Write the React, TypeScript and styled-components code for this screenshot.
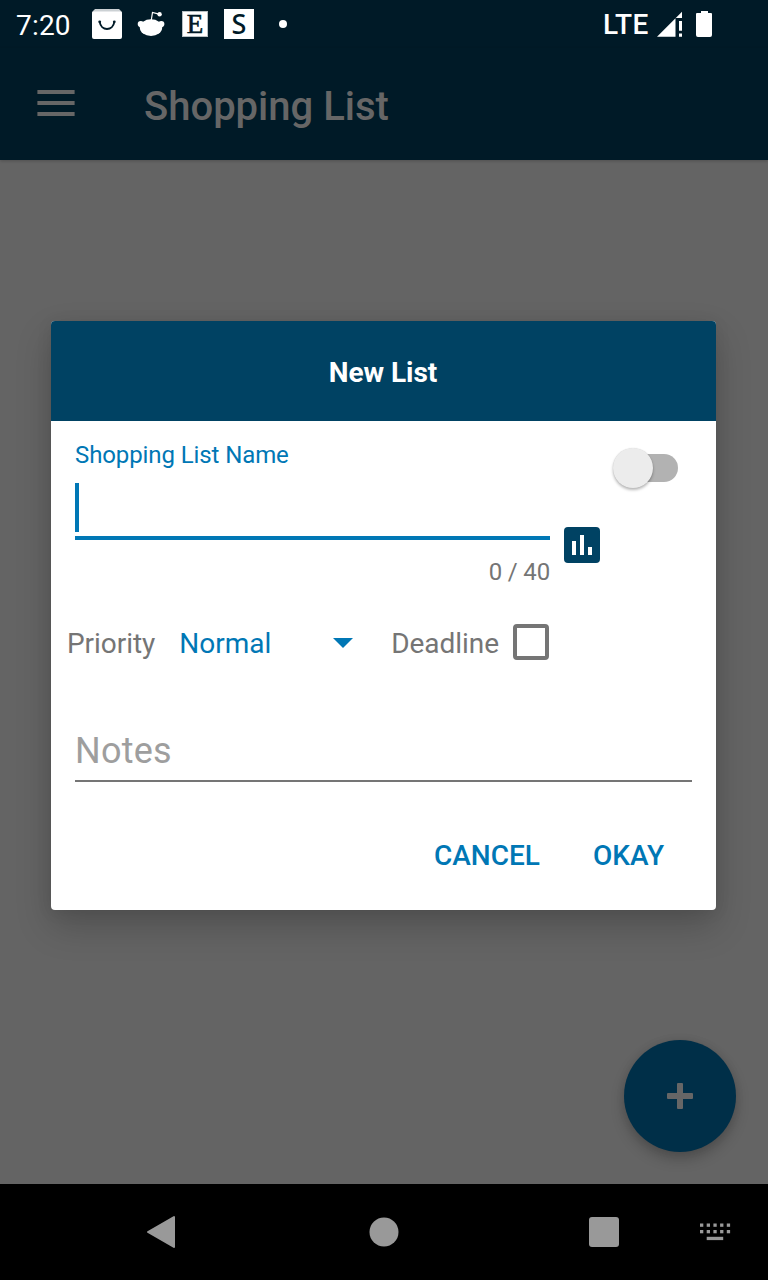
import React from "react";
import styled, { createGlobalStyle } from "styled-components";

const GlobalStyle = createGlobalStyle`
  * { box-sizing: border-box; }
  body { margin: 0; font-family: Roboto, "Liberation Sans", sans-serif; background: #000; }
  button { font: inherit; border: 0; background: none; padding: 0; }
  svg { display: block; flex: none; }
`;

const Screen = styled.div`
  position: relative;
  width: 768px;
  height: 1280px;
  display: flex;
  flex-direction: column;
  overflow: hidden;
`;

const StatusBar = styled.div`
  height: 48px;
  flex: none;
  display: flex;
  align-items: center;
  padding: 2px 54px 0 16px;
  background: #001a27;
  color: #fff;
  font-size: 28px;
  line-height: 32px;
`;

const Clock = styled.span`
  width: 76px;
  margin-top: 2px;
  letter-spacing: 0.2px;
`;

const StatusIcons = styled.div`
  display: flex;
  align-items: center;
  gap: 14px;
  height: 30px;
  margin-top: -2px;
`;

const SystemIcons = styled.div`
  display: flex;
  align-items: center;
  margin-left: auto;
  margin-top: -2px;
`;

const Page = styled.div`
  flex: 1;
  display: flex;
  flex-direction: column;
  background: #646464;
`;

const AppBar = styled.header`
  height: 112px;
  flex: none;
  display: flex;
  align-items: center;
  padding: 0 0 2px 37px;
  background: #001a27;
  box-shadow: 0 1px 3px rgba(0, 0, 0, 0.2);
`;

const Title = styled.h1`
  margin: 8px 0 0 69px;
  color: #666;
  font-size: 40px;
  font-weight: 500;
  line-height: 48px;
`;

const Content = styled.main`
  flex: 1;
  display: flex;
  align-items: flex-end;
  justify-content: flex-end;
  padding: 32px;
`;

const Fab = styled.button`
  width: 112px;
  height: 112px;
  border-radius: 50%;
  display: grid;
  place-items: center;
  background: #002f48;
  box-shadow: 0 7px 14px rgba(0, 0, 0, 0.22), 0 0 8px rgba(0, 0, 0, 0.08);
`;

const NavBar = styled.nav`
  height: 96px;
  flex: none;
  display: flex;
  align-items: center;
  padding-left: 146px;
  background: #000;
`;

const NavItem = styled.div<{ $gap: number }>`
  margin-right: ${(p) => p.$gap}px;
`;

const Dialog = styled.section`
  position: absolute;
  left: 51px;
  top: 321px;
  width: 665px;
  height: 589px;
  display: flex;
  flex-direction: column;
  border-radius: 4px;
  overflow: hidden;
  background: #fff;
  box-shadow: 0 16px 36px rgba(0, 0, 0, 0.2), 0 2px 16px rgba(0, 0, 0, 0.08);
`;

const DialogHeader = styled.h2`
  height: 100px;
  flex: none;
  display: flex;
  align-items: center;
  justify-content: center;
  margin: 0;
  padding: 2px 1px 0 0;
  background: #004263;
  color: #fff;
  font-size: 28px;
  font-weight: 700;
  letter-spacing: -0.05px;
`;

const NameRow = styled.div`
  height: 179px;
  display: flex;
  align-items: flex-start;
  padding: 0 38px 0 24px;
`;

const NameField = styled.div`
  width: 475px;
  display: flex;
  flex-direction: column;
`;

const NameLabel = styled.label`
  margin-top: 20px;
  color: #0077b5;
  font-size: 24px;
  letter-spacing: -0.1px;
  line-height: 28px;
`;

const NameInput = styled.div`
  height: 57px;
  margin-top: 14px;
  border-bottom: 4px solid #0077b5;
`;

const Caret = styled.div`
  width: 4px;
  height: 49px;
  background: #0077b5;
`;

const Counter = styled.div`
  margin-top: 18px;
  color: #757575;
  font-size: 24px;
  letter-spacing: -0.15px;
  line-height: 28px;
  text-align: right;
`;

const ChartButton = styled.button`
  width: 36px;
  height: 36px;
  margin: 106px 0 0 14px;
`;

const Switch = styled.div`
  width: 65px;
  height: 42px;
  margin: 26px 0 0 auto;
  display: flex;
  align-items: center;
`;

const Thumb = styled.div`
  z-index: 1;
  width: 40px;
  height: 40px;
  flex: none;
  border-radius: 50%;
  background: #ececec;
  box-shadow: 0 2px 3px rgba(0, 0, 0, 0.28), 0 0 1px rgba(0, 0, 0, 0.15);
`;

const Track = styled.div`
  width: 56px;
  height: 28px;
  flex: none;
  margin-left: -31px;
  border-radius: 14px;
  background: #b2b2b2;
`;

const OptionsRow = styled.div`
  height: 84px;
  display: flex;
  align-items: center;
  padding: 4px 0 0 16px;
  font-size: 28px;
  letter-spacing: -0.05px;
  line-height: 32px;
  color: #757575;
`;

const PrioritySelect = styled.div`
  width: 174px;
  margin: 0 38px 0 24px;
  display: flex;
  align-items: center;
  justify-content: space-between;
  color: #0077b5;
  letter-spacing: 0;

  svg {
    margin-top: -2px;
  }
`;

const Checkbox = styled.div`
  width: 36px;
  height: 36px;
  margin: -4px 0 0 13.8px;
  border: 4px solid #757575;
  border-radius: 4px;
`;

const NotesField = styled.div`
  height: 57px;
  margin: 41px 24px 0;
  border-bottom: 2px solid #757575;
  color: #9e9e9e;
  font-size: 36px;
  letter-spacing: 0.25px;
  line-height: 52px;
`;

const Actions = styled.div`
  flex: 1;
  display: flex;
  align-items: center;
  justify-content: flex-end;
  gap: 53px;
  padding: 20px 52px 0 0;
`;

const ActionButton = styled.button`
  color: #0077b5;
  font-size: 28px;
  font-weight: 500;
  line-height: 32px;
`;

const BagIcon = () => (
  <svg width="30" height="30" viewBox="0 0 30 30">
    <path d="M3 0H27L30 3V6H0V3Z" fill="#ccd1d4" />
    <rect y="2.500" width="30" height="27.500" rx="2" fill="#fff" />
    <path d="M7.700 13C8.300 17 11.300 20 15 20S21.700 17 22.300 13" fill="none" stroke="#001a27" strokeWidth="1.8" />
    <circle cx="7.700" cy="12.800" r="1.400" fill="#001a27" />
    <circle cx="22.300" cy="12.800" r="1.400" fill="#001a27" />
  </svg>
);

const RedditIcon = () => (
  <svg width="30" height="30" viewBox="0 0 30 30">
    <g fill="#fff">
      <ellipse cx="15" cy="18.600" rx="11.200" ry="8.400" />
      <circle cx="4.800" cy="15" r="3.100" />
      <circle cx="25.300" cy="15" r="3.100" />
      <circle cx="23.600" cy="5.200" r="2.200" />
    </g>
    <path d="M15.300 11L16.500 3.500L22 4.800" fill="none" stroke="#fff" strokeWidth="1.200" />
  </svg>
);

const LetterIcon = styled.span<{ $serif?: boolean }>`
  width: ${(p) => (p.$serif ? 26 : 30)}px;
  height: ${(p) => (p.$serif ? 26 : 30)}px;
  margin: ${(p) => (p.$serif ? "0 2px" : "0")};
  display: grid;
  place-items: center;
  border: ${(p) => (p.$serif ? "1px solid #b8c0c4" : "0")};
  background: #fff;
  color: #001a27;
  font-family: ${(p) => (p.$serif ? '"Liberation Serif", serif' : '"Noto Sans", sans-serif')};
  font-size: ${(p) => (p.$serif ? 27 : 27)}px;
  font-weight: ${(p) => (p.$serif ? 400 : 500)};
  -webkit-text-stroke: ${(p) => (p.$serif ? "0.6px #001a27" : "0")};
  line-height: ${(p) => (p.$serif ? 24 : 22)}px;
`;

const Dot = styled.span`
  width: 8px;
  height: 8px;
  margin-left: 11px;
  border-radius: 50%;
  background: #fff;
`;

const Network = styled.span`
  margin: 2px 8.5px 0 0;
  font-weight: 500;
  letter-spacing: 0.3px;
`;

const SignalIcon = () => (
  <svg width="26" height="26" viewBox="0 0 26 26" fill="#fff">
    <path d="M25 0.700V7H18.500V25.700H0Z" />
    <path d="M22 10H25V19.700H22ZM22 22.500H25V25.700H22Z" />
  </svg>
);

const BatteryIcon = styled(({ className }: { className?: string }) => (
  <svg className={className} width="18" height="26" viewBox="0 0 18 26" fill="#fff">
    <path d="M5 0H12V2H15Q16 2 16 3V24Q16 26 14 26H2Q0 26 0 24V3Q0 2 1 2H5Z" />
  </svg>
))`
  margin-left: 13px;
`;

const MenuIcon = () => (
  <svg width="38" height="26" viewBox="0 0 38 26" fill="#666">
    <path d="M0.400 0H37.600V4H0.400ZM0.400 11H37.600V15H0.400ZM0.400 22H37.600V26H0.400Z" />
  </svg>
);

const PlusIcon = () => (
  <svg width="26" height="26" viewBox="0 0 26 26" fill="#666">
    <rect x="10" width="6" height="26" rx="1" />
    <rect y="10" width="26" height="6" rx="1" />
  </svg>
);

const ChartIcon = () => (
  <svg width="36" height="36" viewBox="0 0 36 36">
    <rect width="36" height="36" rx="4" fill="#004263" />
    <path d="M8 14H12V28H8ZM16 8H20V28H16ZM24 20H28V28H24Z" fill="#fff" />
  </svg>
);

const DropArrow = () => (
  <svg width="20" height="10" viewBox="0 0 20 10" fill="#0077b5">
    <path d="M0 0H20L10 10Z" />
  </svg>
);

const BackIcon = () => (
  <svg width="30" height="34" viewBox="0 0 30 34">
    <path d="M2 17L28 2V32Z" fill="#999" stroke="#999" strokeWidth="2" strokeLinejoin="round" />
  </svg>
);

const HomeIcon = () => (
  <svg width="30" height="30" viewBox="0 0 30 30">
    <circle cx="15" cy="15" r="14.500" fill="#999" />
  </svg>
);

const RecentsIcon = () => (
  <svg width="30" height="30" viewBox="0 0 30 30">
    <rect width="30" height="30" rx="3" fill="#999" />
  </svg>
);

const KeyboardIcon = () => (
  <svg width="31" height="18" viewBox="0 0 31 18" fill="#999">
    {[0, 6.7, 13.4, 20.1, 26.8].map((x) => (
      <g key={x}>
        <rect x={x} y="0.500" width="3.300" height="3.300" />
        <rect x={x} y="7" width="3.300" height="3.300" />
      </g>
    ))}
    <rect x="6.700" y="13.800" width="16.500" height="3.300" />
  </svg>
);

export default function App() {
  return (
    <>
      <GlobalStyle />
      <Screen>
        <StatusBar>
          <Clock>7:20</Clock>
          <StatusIcons>
            <BagIcon />
            <RedditIcon />
            <LetterIcon $serif>E</LetterIcon>
            <LetterIcon>S</LetterIcon>
            <Dot />
          </StatusIcons>
          <SystemIcons>
            <Network>LTE</Network>
            <SignalIcon />
            <BatteryIcon />
          </SystemIcons>
        </StatusBar>
        <Page>
          <AppBar>
            <MenuIcon />
            <Title>Shopping List</Title>
          </AppBar>
          <Content>
            <Fab aria-label="Add list">
              <PlusIcon />
            </Fab>
          </Content>
        </Page>
        <NavBar>
          <NavItem $gap={193}><BackIcon /></NavItem>
          <NavItem $gap={190}><HomeIcon /></NavItem>
          <NavItem $gap={81}><RecentsIcon /></NavItem>
          <KeyboardIcon />
        </NavBar>
        <Dialog role="dialog">
          <DialogHeader>New List</DialogHeader>
          <NameRow>
            <NameField>
              <NameLabel>Shopping List Name</NameLabel>
              <NameInput><Caret /></NameInput>
              <Counter>0 / 40</Counter>
            </NameField>
            <ChartButton aria-label="Statistics"><ChartIcon /></ChartButton>
            <Switch role="switch" aria-checked="false">
              <Thumb />
              <Track />
            </Switch>
          </NameRow>
          <OptionsRow>
            <span>Priority</span>
            <PrioritySelect>
              <span>Normal</span>
              <DropArrow />
            </PrioritySelect>
            <span>Deadline</span>
            <Checkbox role="checkbox" aria-checked="false" />
          </OptionsRow>
          <NotesField>Notes</NotesField>
          <Actions>
            <ActionButton>CANCEL</ActionButton>
            <ActionButton>OKAY</ActionButton>
          </Actions>
        </Dialog>
      </Screen>
    </>
  );
}
